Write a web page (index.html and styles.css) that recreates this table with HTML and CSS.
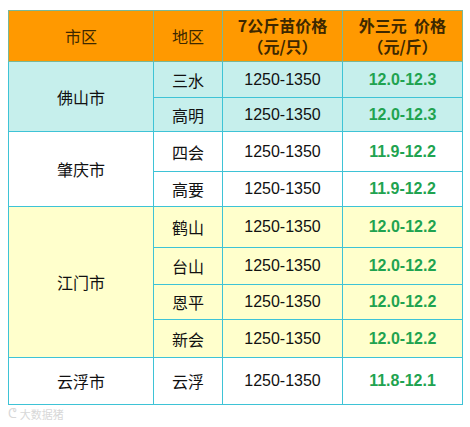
FILE: index.html
```html
<!DOCTYPE html>
<html lang="zh">
<head>
<meta charset="utf-8">
<link rel="stylesheet" href="styles.css">
</head>
<body>
<table class="price-table">
  <colgroup>
    <col class="c-city"><col class="c-area"><col class="c-price"><col class="c-out">
  </colgroup>
  <thead>
    <tr class="head">
      <th class="th-plain">市区</th>
      <th class="th-plain">地区</th>
      <th class="th-bold"><span class="hl">7公斤苗价格</span><span class="hl">（元/只）</span></th>
      <th class="th-bold"><span class="hl">外三元&nbsp; 价格</span><span class="hl">（元/斤）</span></th>
    </tr>
  </thead>
  <tbody>
    <tr class="cyan h1"><td rowspan="2">佛山市</td><td>三水</td><td class="num">1250-1350</td><td class="out">12.0-12.3</td></tr>
    <tr class="cyan h2"><td>高明</td><td class="num">1250-1350</td><td class="out">12.0-12.3</td></tr>
    <tr class="white h3"><td rowspan="2">肇庆市</td><td>四会</td><td class="num">1250-1350</td><td class="out">11.9-12.2</td></tr>
    <tr class="white h4"><td>高要</td><td class="num">1250-1350</td><td class="out">11.9-12.2</td></tr>
    <tr class="yellow h5"><td rowspan="4">江门市</td><td>鹤山</td><td class="num">1250-1350</td><td class="out">12.0-12.2</td></tr>
    <tr class="yellow h6"><td>台山</td><td class="num">1250-1350</td><td class="out">12.0-12.2</td></tr>
    <tr class="yellow h7"><td>恩平</td><td class="num">1250-1350</td><td class="out">12.0-12.2</td></tr>
    <tr class="yellow h8"><td>新会</td><td class="num">1250-1350</td><td class="out">12.0-12.2</td></tr>
    <tr class="white h9"><td>云浮市</td><td>云浮</td><td class="num">1250-1350</td><td class="out">11.8-12.1</td></tr>
  </tbody>
</table>
<div class="watermark"><span class="wm-icon">ᕦ</span><span class="wm-text">大数据猪</span></div>
</body>
</html>
```

FILE: styles.css
```css
html, body {
  margin: 0;
  padding: 0;
  background: #ffffff;
}
body {
  padding: 10px 0 0 8px;
  font-family: "Noto Sans CJK SC", "Liberation Sans", sans-serif;
}
.price-table {
  border-collapse: collapse;
  table-layout: fixed;
  width: 454px;
}
.c-city { width: 145px; }
.c-area { width: 69px; }
.c-price { width: 120px; }
.c-out { width: 120px; }

.price-table th,
.price-table td {
  border: 1px solid #3ec3d6;
  text-align: center;
  vertical-align: middle;
  padding: 0;
  font-size: 16px;
  color: #111111;
  line-height: 18px;
}
.head th {
  background: #ff9900;
  border-color: #7ab896;
  height: 50px;
  color: #3d2800;
}
.th-plain {
  font-weight: normal;
  font-size: 17px;
}
.th-bold {
  font-weight: bold;
  font-size: 17px;
  color: #2a1a00;
}
.hl {
  display: block;
  line-height: 21px;
  white-space: nowrap;
}
.cyan td { background: #c6efec; }
.white td { background: #ffffff; }
.yellow td { background: #ffffcc; }

.num {
  font-family: "Liberation Sans", Arial, sans-serif;
  font-size: 16px;
}
.price-table td.out {
  font-family: "Liberation Sans", Arial, sans-serif;
  font-weight: bold;
  font-size: 16px;
  color: #1fa350;
}
.h1 { height: 36px; }
.h2 { height: 34px; }
.h3 { height: 40px; }
.h4 { height: 35px; }
.h5 { height: 41px; }
.h6 { height: 37px; }
.h7 { height: 35px; }
.h8 { height: 38px; }
.h9 { height: 47px; }

.watermark {
  display: flex;
  align-items: center;
  gap: 3px;
  margin-top: 2px;
  color: #d8d8d8;
  font-size: 11px;
  line-height: 14px;
}
.wm-icon {
  font-size: 12px;
  font-family: "DejaVu Sans", sans-serif;
}
.wm-text {
  font-family: "Noto Sans CJK SC", sans-serif;
}
```
